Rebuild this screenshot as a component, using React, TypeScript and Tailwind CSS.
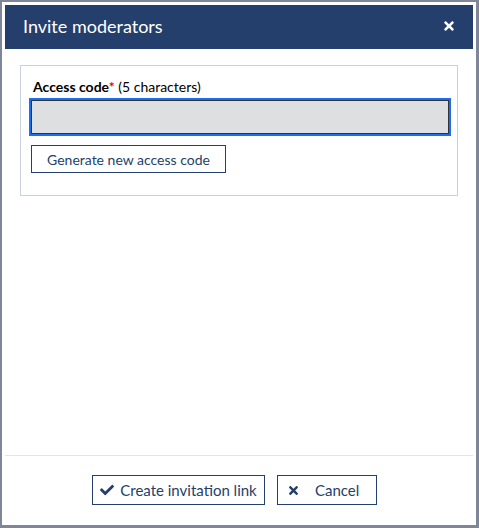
import { FaCheck, FaTimes } from 'react-icons/fa';

export default function App() {
  return (
    <div className="w-[479px] h-[528px] bg-[#7e8698] p-[2px] font-['Lato','Liberation_Sans',sans-serif]">
      <div className="h-[523px] w-[474px] bg-white p-[3px] flex flex-col">
        {/* Header */}
        <div className="h-[44px] shrink-0 bg-[#243f6b] flex items-center justify-between pl-[18px] pr-[17px] pb-[2px]">
          <h1 className="text-white text-[18px] leading-none">Invite moderators</h1>
          <button className="text-white">
            <FaTimes className="w-[14px] h-[14px]" />
          </button>
        </div>

        {/* Body */}
        <div className="flex-1 px-[15px] pt-[16px]">
          <div className="border border-[#c9d1dc] h-[131px] px-[10px] pt-[12px]">
            <label className="block text-[14px] leading-[18px] text-black pl-[2px]">
              <span className="font-bold">Access code</span>
              <span className="text-[#e00] font-bold">*</span>
              <span> (5 characters)</span>
            </label>
            <input
              className="mt-[4px] block w-[418px] h-[34px] bg-[#dedfe1] border border-[#333] outline-2 outline-[#1a6ef5]"
              type="text"
            />
            <button className="mt-[11px] h-[28px] w-[195px] border border-[#243f6b] text-[#243f6b] text-[14px] bg-white">
              Generate new access code
            </button>
          </div>
        </div>

        {/* Footer */}
        <div className="h-[67px] shrink-0 border-t border-[#e4e4e4] flex items-start justify-center pt-[19px] pr-[9px] gap-[12px]">
          <button className="h-[30px] w-[173px] border border-[#243f6b] text-[#243f6b] text-[15px] flex items-center justify-center gap-[6px] bg-white">
            <FaCheck className="w-[14px] h-[14px]" />
            Create invitation link
          </button>
          <button className="h-[30px] w-[100px] border border-[#243f6b] text-[#243f6b] text-[15px] flex items-center pl-[9px] gap-[15px] bg-white">
            <FaTimes className="w-[13px] h-[13px]" />
            Cancel
          </button>
        </div>
      </div>
    </div>
  );
}
